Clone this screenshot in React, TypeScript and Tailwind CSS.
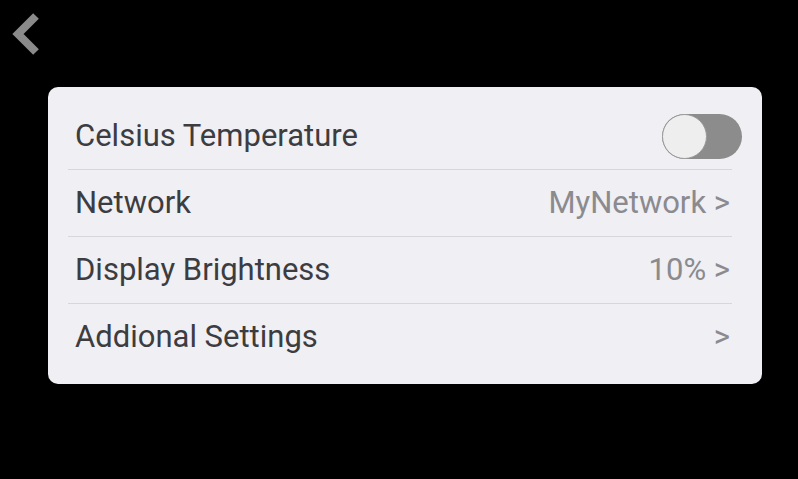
import React from "react";

function Row({ label, value, last, toggle }: { label: string; value?: string; last?: boolean; toggle?: boolean }) {
  return (
    <div className={`flex h-[67px] items-center justify-between ${last ? "" : "border-b border-[#d6d6db]"}`}>
      <span className="pl-[7px] text-[31px] text-[#3c3c41]">{label}</span>
      {toggle ? (
        <div className="relative mr-[-10px] h-[45px] w-[80px] rounded-full bg-[#8c8c8c]">
          <div className="absolute left-0 top-0 h-[45px] w-[45px] rounded-full border border-[#9a9a9a] bg-[#eeeeee]" />
        </div>
      ) : (
        <span className="pr-[2px] text-[31px] text-[#8a8a8f]">{value}</span>
      )}
    </div>
  );
}

export default function App() {
  return (
    <div className="relative h-[479px] w-[798px] bg-black" style={{ fontFamily: "Roboto, 'Noto Sans', sans-serif" }}>
      <svg className="absolute left-[8px] top-[12px]" width="36" height="44" viewBox="0 0 36 44">
        <polyline points="28,4 10,22 28,40" fill="none" stroke="#8a8a8a" strokeWidth="8" strokeLinejoin="miter" />
      </svg>
      <div className="absolute left-[48px] top-[87px] h-[297px] w-[714px] rounded-[10px] bg-[#efeff4] pl-[20px] pr-[30px] pt-[16px]">
        <Row label="Celsius Temperature" toggle />
        <Row label="Network" value="MyNetwork >" />
        <Row label="Display Brightness" value="10% >" />
        <Row label="Addional Settings" value=">" last />
      </div>
    </div>
  );
}
